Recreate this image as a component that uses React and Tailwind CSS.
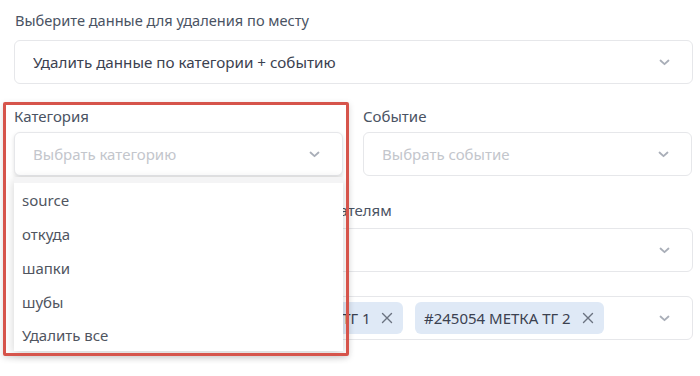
import React from "react";

const Chevron = ({ className = "" }) => (
  <svg width="11" height="7" viewBox="0 0 11 7" className={className} fill="none">
    <path d="M1.5 1.5 L5.5 5.2 L9.5 1.5" stroke="#a9aeb8" strokeWidth="1.8" strokeLinecap="round" strokeLinejoin="round" />
  </svg>
);

const Cross = () => (
  <svg width="12" height="12" viewBox="0 0 12 12" fill="none">
    <path d="M1.5 1.5 L10.5 10.5 M10.5 1.5 L1.5 10.5" stroke="#6b7280" strokeWidth="1.4" strokeLinecap="round" />
  </svg>
);

const Select = ({ children, className = "" }) => (
  <div className={`h-[44px] rounded-md border border-[#e6e7ea] bg-white flex items-center pl-[18px] pr-[22px] ${className}`}>
    <div className="flex-1 min-w-0 flex items-center overflow-hidden">{children}</div>
    <Chevron />
  </div>
);

const Tag = ({ children, w }) => (
  <div className={`h-[32px] shrink-0 rounded-md bg-[#dfe9f6] flex items-center justify-between pl-[9px] pr-[10px] text-[15px] text-[#3b4150] whitespace-nowrap ${w}`}>
    <span>{children}</span>
    <Cross />
  </div>
);

export default function App() {
  return (
    <div
      className="relative w-[700px] h-[376px] overflow-hidden bg-white"
      style={{ fontFamily: "'Noto Sans', 'Open Sans', sans-serif" }}
    >
      <div className="pl-[14px] pr-[7px] pt-[10px] flex flex-col">
        <div className="text-[14.6px] leading-[20px] text-[#4a5363] pl-[1px]">Выберите данные для удаления по месту</div>
        <Select className="mt-[10px]">
          <span className="text-[15.2px] text-[#3b4150]">Удалить данные по категории + событию</span>
        </Select>

        <div className="grid grid-cols-[329px_329px] gap-x-[20px] mt-[22px]">
          <div className="flex flex-col">
            <div className="text-[15px] leading-[20px] text-[#4a5363]">Категория</div>
            <Select className="mt-[6px] shadow-[0_2px_4px_rgba(0,0,0,0.12)]">
              <span className="text-[15px] text-[#c3c6cc]">Выбрать категорию</span>
            </Select>
          </div>
          <div className="flex flex-col">
            <div className="text-[15px] leading-[20px] text-[#4a5363]">Событие</div>
            <Select className="mt-[6px]">
              <span className="text-[15px] text-[#c3c6cc]">Выбрать событие</span>
            </Select>
          </div>
        </div>

        <div className="text-[15px] leading-[20px] text-[#4a5363] mt-[24px] pl-[198px]">Удалить по получателям</div>
        <Select className="mt-[8px]">
          <span />
        </Select>

        <Select className="mt-[24px] pl-[16px]">
          <div className="flex items-center">
            <Tag w="w-[169px] mr-[13px]">#245054 МЕТКА</Tag>
            <Tag w="w-[188px] mr-[12px]">#245054 МЕТКА ТГ 1</Tag>
            <Tag w="w-[189px]">#245054 МЕТКА ТГ 2</Tag>
          </div>
        </Select>
      </div>

      {/* dropdown menu */}
      <div className="absolute left-[14px] top-[177px] w-[329px] h-[174px] bg-white shadow-[0_3px_10px_rgba(0,0,0,0.18)] flex flex-col">
        <div className="h-[8px] bg-[#f4f4f5]" />
        <div className="flex flex-col pl-[8px] text-[15px] text-[#50555f]">
          <div className="h-[34px] flex items-center pt-[1px]">source</div>
          <div className="h-[34px] flex items-center">откуда</div>
          <div className="h-[34px] flex items-center">шапки</div>
          <div className="h-[34px] flex items-center">шубы</div>
          <div className="h-[32px] flex items-center">Удалить все</div>
        </div>
      </div>

      {/* annotation frame */}
      <div className="absolute left-[3px] top-[102px] w-[346px] h-[254px] border-[3px] border-[#d6544b] rounded-[2px] shadow-[0_2px_6px_rgba(0,0,0,0.15)]" />
    </div>
  );
}
